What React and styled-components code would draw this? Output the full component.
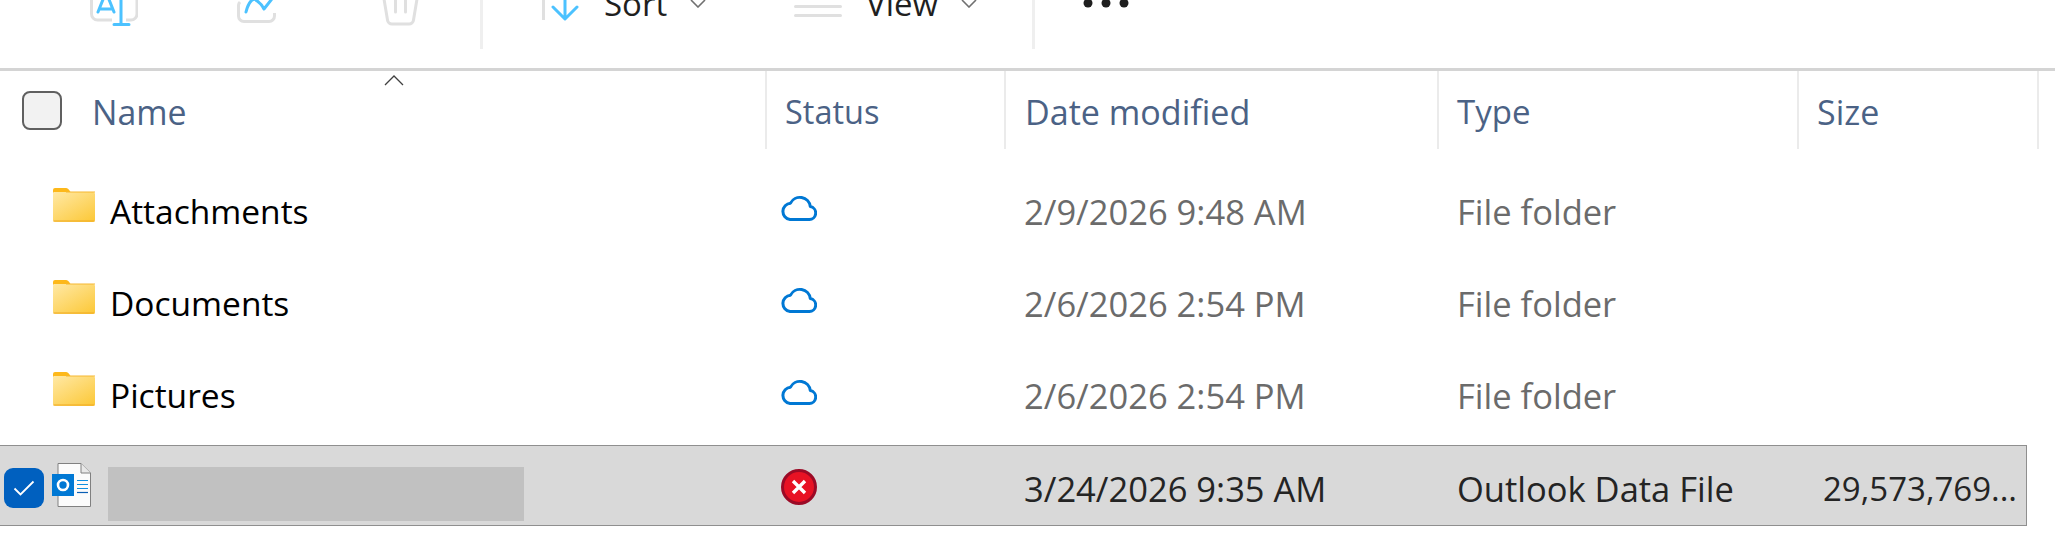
import React from 'react';
import styled, { createGlobalStyle } from 'styled-components';

const Global = createGlobalStyle`
  html, body { margin: 0; padding: 0; background: #fff; overflow: hidden; }
  body { font-family: "Open Sans", "Noto Sans", sans-serif; }
`;

const Page = styled.div`
  width: 2055px;
  height: 553px;
  overflow: hidden;
  background: #fff;
`;

const Toolbar = styled.div`
  height: 68px;
  display: flex;
  align-items: flex-start;
  overflow: hidden;
  border-bottom: 3px solid #d4d4d4;
`;

const ToolIcon = styled.svg`
  flex: none;
  display: block;
  margin-left: ${p => p.$left}px;
  margin-top: -20px;
`;

const ToolSeparator = styled.div`
  flex: none;
  width: 3px;
  height: 49px;
  background: #efefef;
  margin-left: ${p => p.$left}px;
`;

const ToolLabel = styled.span`
  flex: none;
  font-size: 33px;
  line-height: 44px;
  height: 44px;
  margin-top: -18px;
  margin-left: ${p => p.$left}px;
  width: ${p => p.$width}px;
  color: #1f1f1f;
`;

const DotsIcon = styled.svg`
  flex: none;
  display: block;
  margin-left: ${p => p.$left}px;
`;

const HeaderRow = styled.div`
  display: grid;
  grid-template-columns: 767px 239px 433px 360px 240px;
  width: 2039px;
  height: 78px;
  position: relative;
`;

const HeaderCell = styled.div`
  box-sizing: border-box;
  display: flex;
  align-items: center;
  height: 78px;
  padding-left: ${p => p.$pad || 18}px;
  padding-top: 3px;
  font-size: ${p => p.$size || 33}px;
  color: #4b6285;
  border-right: 2px solid #ebebeb;
`;

const NameHeader = styled(HeaderCell)`
  gap: 30px;
`;

const SortCaret = styled.svg`
  position: absolute;
  left: 384px;
  top: 4px;
`;

const HeaderCheck = styled.div`
  box-sizing: border-box;
  width: 40px;
  height: 39px;
  margin-top: -3px;
  border: 2px solid #606060;
  border-radius: 8px;
  background: #f2f2f2;
`;

const RowList = styled.div`
  padding-top: 17px;
`;

const Row = styled.div`
  box-sizing: border-box;
  display: grid;
  grid-template-columns: 766px 239px 433px 360px 229px;
  height: 92px;
  width: 2027px;
  align-items: center;
  color: #6b6b6b;
`;

const SelectedRow = styled(Row)`
  height: 81px;
  margin-top: 3px;
  background: #d9d9d9;
  border: 1.5px solid #8f8f8f;
  border-left: none;
  color: #242424;
`;

const NameCell = styled.div`
  display: flex;
  align-items: center;
  padding-left: 53px;
  padding-bottom: 2px;
  color: #000;
  font-size: 33.5px;
`;

const SelectedNameCell = styled.div`
  display: flex;
  align-items: center;
  padding-left: 4px;
`;

const FolderGlyph = styled.svg`
  flex: none;
  margin-right: 15px;
  margin-top: -12px;
`;

const RowCheck = styled.div`
  flex: none;
  width: 40px;
  height: 40px;
  margin-top: 4px;
  border-radius: 9px;
  background: #0060bf;
  display: flex;
  align-items: center;
  justify-content: center;
`;

const FileGlyph = styled.svg`
  flex: none;
  margin-left: 8px;
  margin-top: -2px;
`;

const Redacted = styled.div`
  flex: none;
  width: 416px;
  height: 54px;
  margin-left: 17px;
  margin-top: 16px;
  background: #c1c1c1;
`;

const StatusCell = styled.div`
  display: flex;
  align-items: center;
  padding-left: 15px;
  margin-top: ${p => p.$shift}px;
`;

const TextCell = styled.div`
  padding-left: ${p => p.$pad}px;
  margin-top: ${p => p.$shift}px;
  font-size: ${p => p.$size || 34.5}px;
  white-space: nowrap;
`;

const Folder = () => (
  <FolderGlyph width="42" height="34" viewBox="0 0 42 34">
    <defs>
      <linearGradient id="fold" x1="0.1" y1="0" x2="0.9" y2="1">
        <stop offset="0" stopColor="#ffe7a0" />
        <stop offset="1" stopColor="#fcc93a" />
      </linearGradient>
    </defs>
    <path d="M2 0h11c1.500 0 2.500 1 3.500 2.500l1 1.500H2a2 2 0 0 0-2 2V2a2 2 0 0 1 2-2z" fill="#fdb81a" />
    <path d="M0 6a2 2 0 0 1 2-2h38a2 2 0 0 1 2 2v26a2 2 0 0 1-2 2H2a2 2 0 0 1-2-2z" fill="url(#fold)" />
    <path d="M0.500 33h41" stroke="#efaa24" strokeWidth="1.200" />
    <path d="M13 4h29" stroke="#f5b731" strokeWidth="1" />
  </FolderGlyph>
);

const Cloud = () => (
  <svg width="36" height="27" viewBox="0 0 36 27">
    <path
      d="M9 25.500h19a6.500 6.500 0 0 0 1.300-12.900A10.500 10.500 0 0 0 9.500 9.200 8.200 8.200 0 0 0 9 25.500z"
      fill="none"
      stroke="#0078d4"
      strokeWidth="3"
      strokeLinejoin="round"
    />
  </svg>
);

const ErrorBadge = () => (
  <svg width="36" height="36" viewBox="0 0 36 36">
    <circle cx="18" cy="18" r="16.500" fill="#e81224" stroke="#9b0a26" strokeWidth="3" />
    <path d="M12 12l12 12M24 12L12 24" stroke="#fff" strokeWidth="3.400" />
  </svg>
);

const OutlookFile = () => (
  <FileGlyph width="39" height="44" viewBox="0 0 39 44">
    <path d="M6 .5h23l9.500 9.500v33.500H6z" fill="#fbfbfb" stroke="#808080" strokeWidth="1" />
    <path d="M29 .5V10h9.500" fill="#e8e8e8" stroke="#808080" strokeWidth="1" />
    <path d="M25 17.500h11M25 21.500h11M25 25.500h11" stroke="#0f8fe0" strokeWidth="1.200" />
    <path d="M25 29.500h11" stroke="#0a5fb4" strokeWidth="1.200" />
    <rect x="0" y="11" width="22" height="22" fill="#0078d4" />
    <circle cx="11" cy="22" r="5" fill="none" stroke="#fff" strokeWidth="2.600" />
  </FileGlyph>
);

const rows = [
  { name: 'Attachments', date: '2/9/2026 9:48 AM' },
  { name: 'Documents', date: '2/6/2026 2:54 PM' },
  { name: 'Pictures', date: '2/6/2026 2:54 PM' },
];

export default function App() {
  return (
    <Page>
      <Global />
      <Toolbar>
        <ToolIcon $left={90} width="48" height="46" viewBox="0 0 48 46">
          <path d="M1.500 20v14a6 6 0 0 0 6 6H22M36 40h5a6 6 0 0 0 6-6V20" fill="none" stroke="#e0e0e0" strokeWidth="3" />
          <path d="M8 32L16 12l8 20M10 29h12" fill="none" stroke="#4cc2ff" strokeWidth="3" strokeLinecap="round" />
          <path d="M31 14v30M24 44.500h15" fill="none" stroke="#4cc2ff" strokeWidth="3" strokeLinecap="round" />
        </ToolIcon>
        <ToolIcon $left={99} width="40" height="44" viewBox="0 0 40 44">
          <path d="M3 22a5 5 0 0 0-1.500 4v10a5.500 5.500 0 0 0 5.500 5.500H32a5.500 5.500 0 0 0 5.500-5.500v-3" fill="none" stroke="#e0e0e0" strokeWidth="3" />
          <path d="M9 32c2-8 5-12 8-13 4 2 8 6 10 10l11-14" fill="none" stroke="#4cc2ff" strokeWidth="3" strokeLinecap="round" strokeLinejoin="round" />
        </ToolIcon>
        <ToolIcon $left={105} width="37" height="46" viewBox="0 0 37 46">
          <path d="M1.500 16l4 24a4.500 4.500 0 0 0 4.500 4h17a4.500 4.500 0 0 0 4.500-4l4-24" fill="none" stroke="#e0e0e0" strokeWidth="3" />
          <path d="M13.500 16v16M23.500 16v16" stroke="#e0e0e0" strokeWidth="3" strokeLinecap="round" />
        </ToolIcon>
        <ToolSeparator $left={61} />
        <ToolIcon $left={59} width="38" height="42" viewBox="0 0 38 42">
          <path d="M1.500 16v24" stroke="#e0e0e0" strokeWidth="3" />
          <path d="M23 14v24M11 27l12 12 12-12" fill="none" stroke="#4cc2ff" strokeWidth="3" strokeLinecap="round" strokeLinejoin="round" />
        </ToolIcon>
        <ToolLabel $left={24} $width={86}>Sort</ToolLabel>
        <ToolIcon $left={0} width="16" height="28" viewBox="0 0 16 28">
          <path d="M1 20l7 7 7-7" fill="none" stroke="#707070" strokeWidth="1.600" />
        </ToolIcon>
        <ToolIcon $left={88} width="48" height="38" viewBox="0 0 48 38">
          <path d="M1.500 26.500h45M1.500 35.500h45" stroke="#e0e0e0" strokeWidth="3" strokeLinecap="round" />
        </ToolIcon>
        <ToolLabel $left={24} $width={95}>View</ToolLabel>
        <ToolIcon $left={0} width="16" height="28" viewBox="0 0 16 28">
          <path d="M1 20l7 7 7-7" fill="none" stroke="#707070" strokeWidth="1.600" />
        </ToolIcon>
        <ToolSeparator $left={55} />
        <DotsIcon $left={48} width="50" height="10" viewBox="0 0 50 10">
          <circle cx="5" cy="3" r="4.500" fill="#1f1f1f" />
          <circle cx="23" cy="3" r="4.500" fill="#1f1f1f" />
          <circle cx="41" cy="3" r="4.500" fill="#1f1f1f" />
        </DotsIcon>
      </Toolbar>
      <HeaderRow>
        <NameHeader $size={33.8} $pad={22}>
          <HeaderCheck />
          Name
        </NameHeader>
        <HeaderCell $size={32.5}>Status</HeaderCell>
        <HeaderCell $size={34.1} $pad={19}>Date modified</HeaderCell>
        <HeaderCell $size={33}>Type</HeaderCell>
        <HeaderCell $size={34}>Size</HeaderCell>
        <SortCaret width="20" height="11" viewBox="0 0 20 11">
          <path d="M1 10l9-9 9 9" fill="none" stroke="#404040" strokeWidth="1.300" />
        </SortCaret>
      </HeaderRow>
      <RowList>
        {rows.map(r => (
          <Row key={r.name}>
            <NameCell>
              <Folder />
              {r.name}
            </NameCell>
            <StatusCell $shift={-10}><Cloud /></StatusCell>
            <TextCell $pad={19} $shift={-2}>{r.date}</TextCell>
            <TextCell $pad={19} $shift={-2}>File folder</TextCell>
            <TextCell $pad={19} $shift={-2} />
          </Row>
        ))}
        <SelectedRow>
          <SelectedNameCell>
            <RowCheck>
              <svg width="22" height="16" viewBox="0 0 22 16">
                <path d="M1.500 8.500l6 6L20.500 1.500" fill="none" stroke="#fff" strokeWidth="1.800" />
              </svg>
            </RowCheck>
            <OutlookFile />
            <Redacted />
          </SelectedNameCell>
          <StatusCell $shift={2}><ErrorBadge /></StatusCell>
          <TextCell $pad={19} $shift={6}>3/24/2026 9:35 AM</TextCell>
          <TextCell $pad={19} $shift={6}>Outlook Data File</TextCell>
          <TextCell $pad={25} $shift={6} $size={33}>29,573,769...</TextCell>
        </SelectedRow>
      </RowList>
    </Page>
  );
}
